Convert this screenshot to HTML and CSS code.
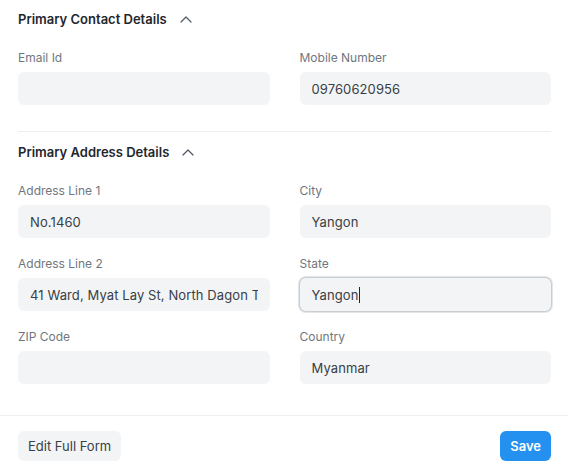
FILE: index.html
```html
<!DOCTYPE html>
<html lang="en">
<head>
  <meta charset="UTF-8" />
  <meta name="viewport" content="width=device-width, initial-scale=1.0" />
  <title>Quick Entry</title>
  <link rel="stylesheet" href="styles.css">
</head>
<body>
  <div class="dialog">
    <div class="section first">
      <div class="section-head">
        <span>Primary Contact Details</span>
        <svg class="chevron" width="16" height="16" viewBox="0 0 16 16"><path d="M3 10l5-5 5 5" /></svg>
      </div>
      <div class="grid">
        <div class="field">
          <label>Email Id</label>
          <input type="text" value="" />
        </div>
        <div class="field">
          <label>Mobile Number</label>
          <input type="text" value="09760620956" />
        </div>
      </div>
    </div>

    <div class="section">
      <div class="section-head">
        <span>Primary Address Details</span>
        <svg class="chevron" width="16" height="16" viewBox="0 0 16 16"><path d="M3 10l5-5 5 5" /></svg>
      </div>
      <div class="grid">
        <div class="field">
          <label>Address Line 1</label>
          <input type="text" value="No.1460" />
        </div>
        <div class="field">
          <label>City</label>
          <input type="text" value="Yangon" />
        </div>
        <div class="field">
          <label>Address Line 2</label>
          <div class="fake-input"><span class="value">41 Ward, Myat Lay St, North Dagon Township</span></div>
        </div>
        <div class="field">
          <label>State</label>
          <div class="fake-input focused"><span>Yangon</span><span class="caret"></span></div>
        </div>
        <div class="field">
          <label>ZIP Code</label>
          <input type="text" value="" />
        </div>
        <div class="field">
          <label>Country</label>
          <input type="text" value="Myanmar" />
        </div>
      </div>
    </div>

    <div class="footer">
      <button class="btn">Edit Full Form</button>
      <button class="btn primary">Save</button>
    </div>
  </div>
</body>
</html>
```

FILE: styles.css
```css
body {
  font-family: Inter, "Noto Sans", sans-serif;
  background: white;
  margin: 0;
  color: #1f272e;
}
.dialog {
  width: 568px;
}
.section {
  padding: 10px 17px 0 18px;
}
.section.first {
  padding-top: 9px;
}
.section .grid {
  padding-bottom: 26px;
}
.section.first .grid {
  border-bottom: 1px solid #edf0f2;
}
.section-head {
  display: flex;
  align-items: center;
  font-size: 13px;
  font-weight: 600;
  line-height: 20px;
  height: 20px;
  margin-bottom: 21px;
}
.chevron {
  margin-left: 11px;
  margin-top: 1px;
}
.chevron path {
  fill: none;
  stroke: #525c66;
  stroke-width: 1.3;
  stroke-linecap: round;
  stroke-linejoin: round;
}
.grid {
  display: grid;
  grid-template-columns: minmax(0, 1fr) minmax(0, 1fr);
  column-gap: 30px;
  row-gap: 18px;
}
.field {
  min-width: 0;
}
.field label {
  display: block;
  font-size: 12px;
  line-height: 16px;
  color: #6f777e;
  margin-bottom: 6px;
}
.field input, .fake-input {
  display: block;
  box-sizing: border-box;
  width: 100%;
  height: 33px;
  padding: 0 12px;
  border: none;
  border-radius: 6px;
  background: #f3f4f5;
  font-family: Inter, "Noto Sans", sans-serif;
  font-size: 13px;
  letter-spacing: 0.1px;
  color: #383f45;
  outline: none;
}
.fake-input {
  display: flex;
  align-items: center;
}
.fake-input .value {
  flex: 1;
  min-width: 0;
  overflow: hidden;
  white-space: nowrap;
}
.fake-input.focused {
  box-shadow: 0 0 0 1px #c9ced2, 0 0 0 2px #e3e6e8;
}
.caret {
  display: inline-block;
  width: 1px;
  height: 16px;
  background: #1f272e;
  margin-left: 1px;
}
.footer {
  display: flex;
  justify-content: space-between;
  align-items: center;
  margin-top: 5px;
  border-top: 1px solid #edf0f2;
  padding: 15px 17px 14px 18px;
}
.btn {
  height: 30px;
  padding: 0 10px;
  border: none;
  border-radius: 6px;
  background: #f3f4f5;
  color: #383f45;
  font-family: Inter, "Noto Sans", sans-serif;
  font-size: 13px;
  cursor: pointer;
}
.btn.primary {
  background: #2490ef;
  color: white;
  font-weight: 600;
  font-size: 13px;
  padding: 0 10px;
}
```
